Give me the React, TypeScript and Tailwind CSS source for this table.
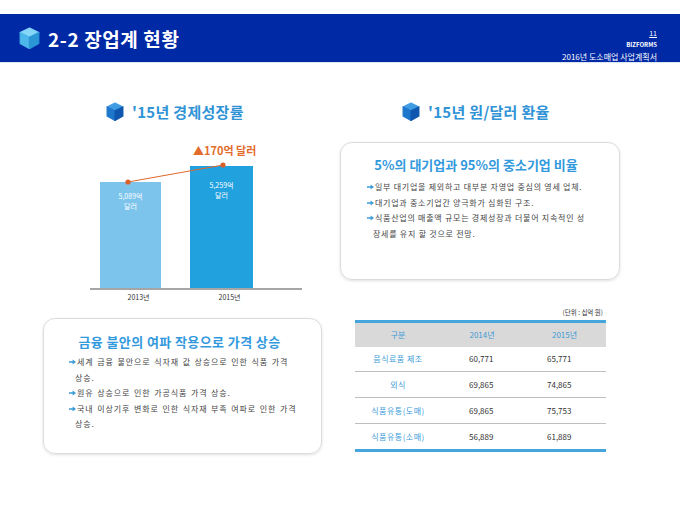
import React from "react";

function Cube({ size = 18, light = false }: { size?: number; light?: boolean }) {
  const top = light ? "#86d6f8" : "#3f9be2";
  const left = light ? "#4db6ea" : "#1f77cc";
  const right = light ? "#2b96d6" : "#0f56ae";
  return (
    <svg width={size} height={size * 1.08} viewBox="0 0 20 22" className="shrink-0">
      <g strokeLinejoin="round" strokeWidth="1.2">
        <path d="M10 1 L19 5.5 L10 10 L1 5.5 Z" fill={top} stroke={top} />
        <path d="M1 5.5 L10 10 L10 21 L1 16 Z" fill={left} stroke={left} />
        <path d="M10 10 L19 5.5 L19 16 L10 21 Z" fill={right} stroke={right} />
      </g>
    </svg>
  );
}

function Arrow() {
  return (
    <svg width="7" height="6" viewBox="0 0 7 6" className="shrink-0 mt-[5px] mr-[1px]">
      <path d="M0 2.2 H3.6 V0.4 L7 3 L3.6 5.6 V3.8 H0 Z" fill="#3b9bd6" />
    </svg>
  );
}

function Bullet({ lines, cls }: { lines: string[]; cls: string }) {
  return (
    <div className="flex">
      <Arrow />
      <div className={cls}>
        {lines.map((l, i) => (
          <div key={i} className={i > 0 ? "-ml-[2px]" : ""}>
            {l}
          </div>
        ))}
      </div>
    </div>
  );
}

const rows = [
  { name: "음식료품 제조", a: "60,771", b: "65,771", h: "h-[25px]" },
  { name: "외식", a: "69,865", b: "74,865", h: "h-[26px]" },
  { name: "식품유통(도매)", a: "69,865", b: "75,753", h: "h-[26px]" },
  { name: "식품유통(소매)", a: "56,889", b: "61,889", h: "h-[28px]" },
];

export default function App() {
  const font = "font-['Noto_Sans_CJK_KR','Noto_Sans',sans-serif]";
  const rightText = "text-[8px] leading-[15.7px] text-[#444] tracking-[0.75px]";
  const leftText = "text-[8px] leading-[15.5px] text-[#444] tracking-[0.9px] [word-spacing:1px]";

  return (
    <div className={`w-[680px] h-[510px] bg-white overflow-hidden ${font}`}>
      <div className="h-[14px]" />
      {/* header bar */}
      <div className="h-[49px] bg-[#0029a6] flex items-center pl-[19px] pr-[23px] border-b border-[#dbe6f5]">
        <Cube size={21} light />
        <div className="ml-[8px] text-white font-bold text-[19px] tracking-[0.6px] leading-none">2-2 장업계 현황</div>
        <div className="ml-auto self-start flex flex-col items-end text-white leading-[12px] pt-[13px]">
          <div className="text-[7px] underline">11</div>
          <div className="text-[6px] font-bold">BIZFORMS</div>
          <div className="text-[8px]">2016년 도소매업 사업계획서</div>
        </div>
      </div>

      <div className="flex gap-[18px] pl-[42px]">
        {/* left column */}
        <div className="w-[280px]">
          <div className="mt-[39px] ml-[64px] h-[19px] flex items-center gap-[8px]">
            <Cube size={18} />
            <div className="text-[15px] font-bold text-[#3093d6] tracking-[0.3px] leading-none">'15년 경제성장률</div>
          </div>

          <div className="relative mt-[18px] ml-[48px] w-[212px] h-[151px] border-b-2 border-[#a6a6a6]">
            <div className="flex items-end h-full pl-[10px] gap-[29px]">
              <div className="w-[61px] h-[106px] bg-[#7cc4ec] pt-[9px] text-center text-white text-[7px] leading-[10px]">
                <div>5,089억</div>
                <div>달러</div>
              </div>
              <div className="w-[63px] h-[122px] bg-[#22a1df] pt-[14px] text-center text-white text-[7px] leading-[10px]">
                <div>5,259억</div>
                <div>달러</div>
              </div>
            </div>
            <svg className="absolute inset-0" width="212" height="149" viewBox="0 0 212 149">
              <line x1="38" y1="43" x2="133" y2="26" stroke="#e0682c" strokeWidth="1" />
              <circle cx="38" cy="43" r="2.6" fill="#d9622b" />
              <circle cx="133" cy="26" r="2.6" fill="#d9622b" />
            </svg>
            <div className="absolute left-[103px] top-[4px] text-[11px] font-bold text-[#e36c2c] leading-[14px] whitespace-nowrap">
              ▲170억 달러
            </div>
          </div>
          <div className="ml-[48px] flex pl-[18px] gap-[29px] mt-[2px] text-[7px] leading-[10px] text-[#333]">
            <div className="w-[61px] text-center">2013년</div>
            <div className="w-[63px] text-center">2015년</div>
          </div>

          <div className="mt-[16px] ml-[1px] w-[279px] h-[136px] rounded-[12px] border border-[#dcdcdc] shadow-[0_1px_3px_rgba(0,0,0,0.12)] pt-[15px]">
            <div className="text-center text-[13px] font-bold text-[#3399dd] tracking-[0.4px] leading-[16px] pr-[6px]">
              금융 불안의 여파 작용으로 가격 상승
            </div>
            <div className="mt-[4px] pl-[25px]">
              <Bullet cls={leftText} lines={["세계 금융 불안으로 식자재 값 상승으로 인한 식품 가격", "상승."]} />
              <Bullet cls={leftText} lines={["원유 상승으로 인한 가공식품 가격 상승."]} />
              <Bullet cls={leftText} lines={["국내 이상기후 변화로 인한 식자재 부족 여파로 인한 가격", "상승."]} />
            </div>
          </div>
        </div>

        {/* right column */}
        <div className="w-[280px]">
          <div className="mt-[39px] ml-[62px] h-[19px] flex items-center gap-[8px]">
            <Cube size={18} />
            <div className="text-[15px] font-bold text-[#3093d6] tracking-[0.3px] leading-none">'15년 원/달러 환율</div>
          </div>

          <div className="mt-[21px] h-[138px] rounded-[12px] border border-[#dcdcdc] shadow-[0_1px_3px_rgba(0,0,0,0.12)] pt-[14px]">
            <div className="text-center text-[13px] font-bold text-[#3399dd] leading-[16px] pr-[8px]">
              5%의 대기업과 95%의 중소기업 비율
            </div>
            <div className="mt-[6px] pl-[26px]">
              <Bullet cls={rightText} lines={["일부 대기업을 제외하고 대부분 자영업 중심의 영세 업체."]} />
              <Bullet cls={rightText} lines={["대기업과 중소기업간 양극화가 심화된 구조."]} />
              <Bullet cls={rightText} lines={["식품산업의 매출액 규모는 경제성장과 더불어 지속적인 성", "장세를 유지 할 것으로 전망."]} />
            </div>
          </div>

          <div className="mt-[28px] pr-[17px] text-right text-[6.5px] leading-[8px] text-[#333]">(단위 : 십억 원)</div>

          <div className="mt-[4px] ml-[15px] w-[251px] border-t-[3px] border-[#45a6dd] text-[8px]">
            <div className="grid grid-cols-[86px_82px_83px] h-[24px] items-center bg-[#d9d9d9] text-[#3c9ad6] text-center">
              <div>구분</div>
              <div>2014년</div>
              <div>2015년</div>
            </div>
            {rows.map((r, i) => (
              <div
                key={r.name}
                className={`grid grid-cols-[86px_82px_83px] items-center ${r.h} ${
                  i === rows.length - 1 ? "border-b-[3px] border-[#45a6dd]" : "border-b border-[#bfbfbf]"
                }`}
              >
                <div className="text-center text-[#3b9bd8] tracking-[0.5px]">{r.name}</div>
                <div className="pl-[28px] text-[#333]">{r.a}</div>
                <div className="pl-[24px] text-[#333]">{r.b}</div>
              </div>
            ))}
          </div>
        </div>
      </div>
    </div>
  );
}
